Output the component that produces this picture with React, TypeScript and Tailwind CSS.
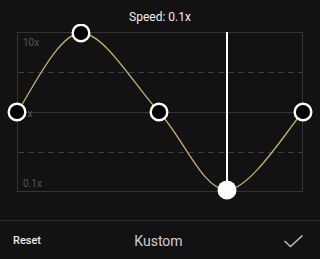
import React from "react"

const points = [
  { x: 17, y: 112, active: false },
  { x: 81, y: 33, active: false },
  { x: 159, y: 112, active: false },
  { x: 227, y: 190, active: true },
  { x: 303, y: 112, active: false },
]

// catmull-rom -> cubic bezier
const curvePath = () => {
  const p = points
  let d = `M${p[0].x},${p[0].y}`
  for (let i = 0; i < p.length - 1; i++) {
    const p0 = p[i - 1] ?? p[i]
    const p1 = p[i]
    const p2 = p[i + 1]
    const p3 = p[i + 2] ?? p2
    const c1x = p1.x + (p2.x - p0.x) / 6
    const c1y = p1.y + (p2.y - p0.y) / 6
    const c2x = p2.x - (p3.x - p1.x) / 6
    const c2y = p2.y - (p3.y - p1.y) / 6
    d += ` C${c1x},${c1y} ${c2x},${c2y} ${p2.x},${p2.y}`
  }
  return d
}

export default function App() {
  return (
    <div className="w-[320px] h-[259px] bg-[#121212] flex flex-col font-['Roboto',sans-serif] overflow-hidden">
      {/* Title */}
      <div className="h-[24px] pt-[11px] text-center text-[12px] leading-[13px] text-[#eeeeee]">Speed: 0.1x</div>

      {/* Curve editor */}
      <svg width="320" height="196" viewBox="0 24 320 196" className="block">
        <rect x="17.5" y="32.5" width="285" height="159" fill="none" stroke="#333333" strokeWidth="1" />
        <line x1="18" y1="72.5" x2="302" y2="72.5" stroke="#3d3d3d" strokeWidth="1" strokeDasharray="6 4" />
        <line x1="18" y1="112.5" x2="302" y2="112.5" stroke="#333333" strokeWidth="1" />
        <line x1="18" y1="152.5" x2="302" y2="152.5" stroke="#3d3d3d" strokeWidth="1" strokeDasharray="6 4" />

        <text x="23" y="46" fill="#555555" fontSize="10" fontFamily="Roboto, sans-serif">10x</text>
        <text x="22" y="117" fill="#555555" fontSize="10" fontFamily="Roboto, sans-serif">1x</text>
        <text x="23" y="187" fill="#555555" fontSize="10" fontFamily="Roboto, sans-serif">0.1x</text>

        <path d={curvePath()} fill="none" stroke="#c4ad6e" strokeWidth="1.3" />

        <line x1="227" y1="32" x2="227" y2="190" stroke="#ffffff" strokeWidth="2" />

        {points.map((pt, i) =>
          pt.active ? (
            <circle key={i} cx={pt.x} cy={pt.y} r="9.5" fill="#ffffff" />
          ) : (
            <circle key={i} cx={pt.x} cy={pt.y} r="8.3" fill="#000000" stroke="#ffffff" strokeWidth="2.4" />
          )
        )}
      </svg>

      {/* Bottom bar */}
      <div className="border-t border-[#2e2e2e] flex-1 grid grid-cols-3 items-center pl-[13px] pr-[16px] pt-[2px]">
        <div className="text-[11px] font-medium text-[#ececec]">Reset</div>
        <div className="text-center text-[14px] text-[#d0d0d0]">Kustom</div>
        <div className="flex justify-end">
          <svg width="21" height="15" viewBox="0 0 21 15">
            <polyline points="1.5,7 7.5,12.5 19.5,1.5" fill="none" stroke="#bdbdbd" strokeWidth="1.6" />
          </svg>
        </div>
      </div>
    </div>
  )
}
